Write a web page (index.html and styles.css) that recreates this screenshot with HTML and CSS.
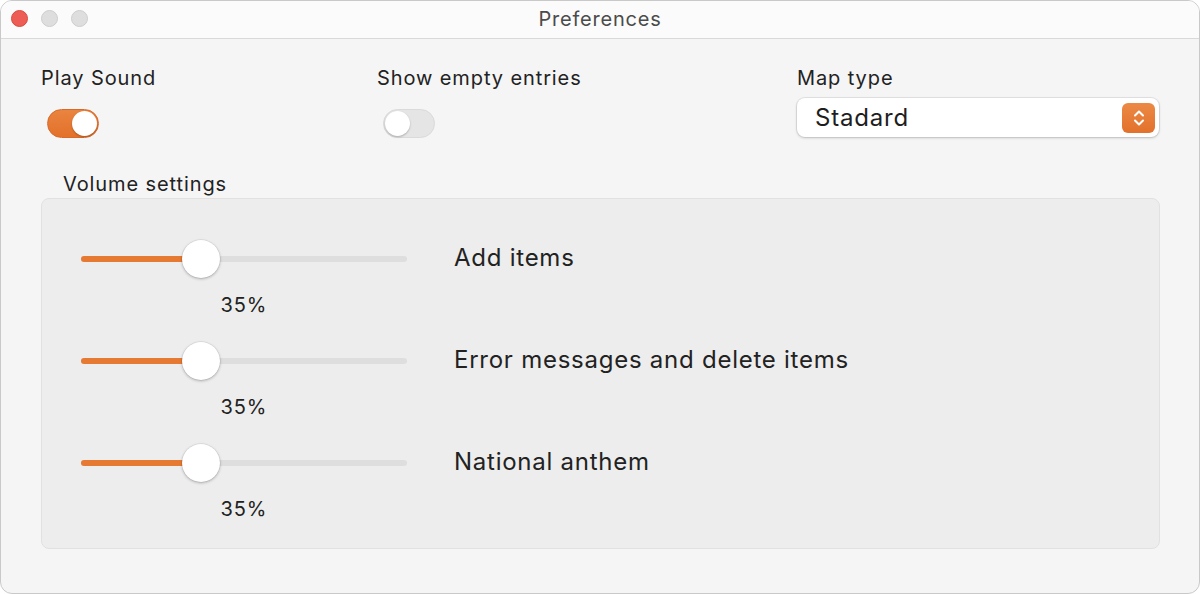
FILE: index.html
```html
<!DOCTYPE html>
<html>
<head>
<meta charset="utf-8">
<link rel="stylesheet" href="styles.css">
</head>
<body>
<div class="window">
  <div class="titlebar">
    <div class="lights">
      <span class="light red"></span>
      <span class="light gray"></span>
      <span class="light gray"></span>
    </div>
    <div class="title">Preferences</div>
  </div>
  <div class="content">
    <div class="top">
      <div class="field">
        <div class="label">Play Sound</div>
        <div class="toggle on"><span class="knob"></span></div>
      </div>
      <div class="field">
        <div class="label">Show empty entries</div>
        <div class="toggle"><span class="knob"></span></div>
      </div>
      <div class="field">
        <div class="label">Map type</div>
        <div class="select">
          <span class="select-text">Stadard</span>
          <span class="stepper">
            <svg width="14" height="20" viewBox="0 0 14 20"><path d="M3 7.5 L7 3.5 L11 7.5 M3 12.5 L7 16.5 L11 12.5" fill="none" stroke="#fff" stroke-width="2" stroke-linecap="round" stroke-linejoin="round"/></svg>
          </span>
        </div>
      </div>
    </div>
    <div class="group-title">Volume settings</div>
    <div class="group">
      <div class="row">
        <div class="slider"><div class="track"><div class="fill" style="width:35%"></div><span class="thumb" style="left:35%"></span></div></div>
        <div class="row-label">Add items</div>
        <div class="pct">35%</div>
      </div>
      <div class="row">
        <div class="slider"><div class="track"><div class="fill" style="width:35%"></div><span class="thumb" style="left:35%"></span></div></div>
        <div class="row-label">Error messages and delete items</div>
        <div class="pct">35%</div>
      </div>
      <div class="row">
        <div class="slider"><div class="track"><div class="fill" style="width:35%"></div><span class="thumb" style="left:35%"></span></div></div>
        <div class="row-label">National anthem</div>
        <div class="pct">35%</div>
      </div>
    </div>
  </div>
</div>
</body>
</html>
```
FILE: styles.css
```css
* { box-sizing: border-box; }
html, body { margin: 0; padding: 0; background: #ffffff; }
body {
  font-family: Inter, "Helvetica Neue", "Liberation Sans", sans-serif;
  color: #222222;
}
.window {
  width: 1200px;
  height: 594px;
  border-radius: 12px;
  border: 1px solid #c9c9c9;
  background: #f5f5f5;
  overflow: hidden;
  display: flex;
  flex-direction: column;
}
.titlebar {
  height: 38px;
  flex: none;
  background: #fbfbfb;
  border-bottom: 1px solid #d9d9d9;
  display: flex;
  align-items: center;
  justify-content: center;
  position: relative;
}
.lights {
  position: absolute;
  left: 10px;
  top: 9px;
  display: flex;
  gap: 13px;
}
.light {
  width: 17px;
  height: 17px;
  border-radius: 50%;
  display: block;
}
.light.red { background: #ee5d55; border: 1px solid #d9493f; }
.light.gray { background: #dedede; border: 1px solid #cdcdcd; }
.title {
  font-size: 20px;
  color: #4b4b4b;
  letter-spacing: 0.8px;
  margin-top: -2px;
}
.content {
  flex: 1;
  padding: 27px 40px 0 40px;
}
.top {
  display: grid;
  grid-template-columns: 336px 420px 362px;
}
.label {
  font-size: 20px;
  line-height: 24px;
  height: 24px;
  letter-spacing: 0.9px;
}
.field:nth-child(1) .label, .field:nth-child(2) .label { margin-bottom: 19px; }
.field:nth-child(3) .label { margin-bottom: 8px; }
.toggle {
  width: 52px;
  height: 29px;
  border-radius: 15px;
  margin-left: 6px;
  background: #e5e5e5;
  border: 1px solid #dadada;
  position: relative;
}
.toggle.on {
  background: linear-gradient(#e9843f, #e3712a);
  border-color: #d9692a;
}
.knob {
  position: absolute;
  top: 1px;
  left: 1px;
  width: 25px;
  height: 25px;
  border-radius: 50%;
  background: #ffffff;
  box-shadow: 0 1px 2px rgba(0,0,0,0.25);
}
.toggle.on .knob { left: 24px; }
.select {
  width: 362px;
  height: 39px;
  background: #ffffff;
  border-radius: 8px;
  box-shadow: 0 0 0 1px rgba(0,0,0,0.07), 0 1px 3px rgba(0,0,0,0.18);
  display: flex;
  align-items: center;
  justify-content: space-between;
  padding: 0 4px 0 18px;
}
.select-text { font-size: 24px; color: #1e1e1e; letter-spacing: 0.8px; }
.stepper {
  width: 33px;
  height: 30px;
  border-radius: 6px;
  background: linear-gradient(#eb8a45, #e2712b);
  display: flex;
  align-items: center;
  justify-content: center;
}
.group-title {
  margin-top: 34px;
  margin-left: 22px;
  font-size: 20px;
  line-height: 24px;
  letter-spacing: 0.9px;
}
.group {
  margin-top: 2px;
  width: 1119px;
  height: 351px;
  background: #ededed;
  border: 1px solid #e1e1e1;
  border-radius: 8px;
  padding: 41px 0 0 39px;
  display: flex;
  flex-direction: column;
  gap: 25px;
}
.row {
  display: grid;
  grid-template-columns: 326px 1fr;
  column-gap: 47px;
  row-gap: 15px;
}
.slider {
  height: 38px;
  display: flex;
  align-items: center;
}
.track {
  width: 326px;
  height: 6px;
  border-radius: 3px;
  background: #dedede;
  position: relative;
}
.fill {
  height: 6px;
  border-radius: 3px;
  background: #e77a33;
}
.thumb {
  position: absolute;
  top: -16px;
  width: 38px;
  height: 38px;
  margin-left: -13px;
  border-radius: 50%;
  background: #ffffff;
  box-shadow: 0 1px 3px rgba(0,0,0,0.28), 0 0 0 0.5px rgba(0,0,0,0.08);
}
.row-label {
  font-size: 24px;
  line-height: 38px;
  margin-top: -1px;
  letter-spacing: 0.75px;
  color: #222222;
}
.pct {
  font-size: 20px;
  line-height: 24px;
  text-align: center;
  letter-spacing: 0.9px;
}
```
